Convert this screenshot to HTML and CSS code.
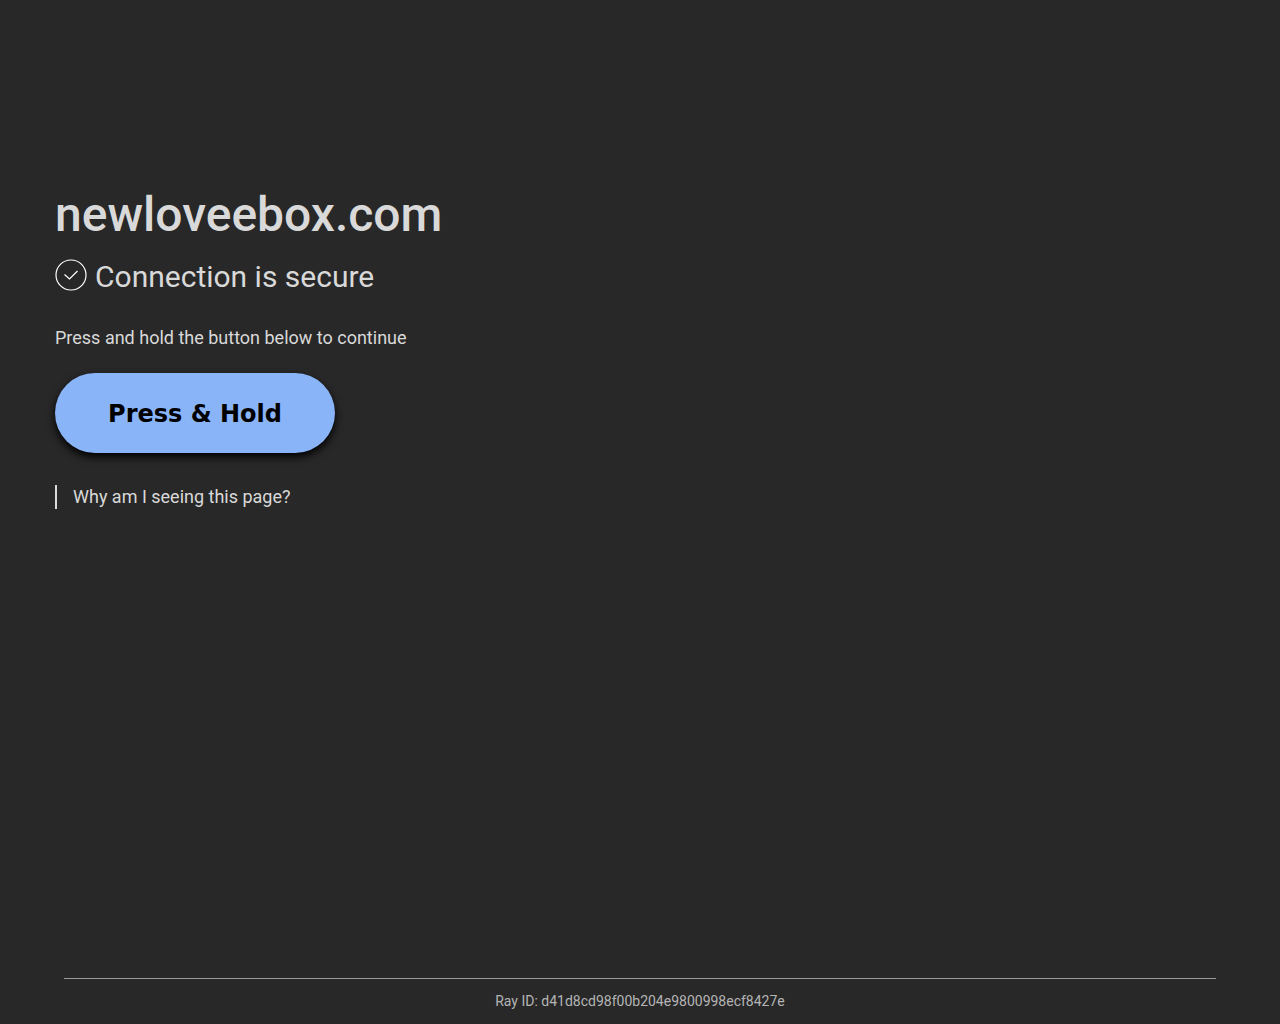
FILE: index.html
```html
<!DOCTYPE html>
<html lang="en">
<head>
  <meta charset="UTF-8">
  <meta name="viewport" content="width=device-width, initial-scale=1.0">
  <title>newloveebox.com</title>
  <link rel="stylesheet" href="styles.css">
</head>
<body>

  <main class="content">
    <h1>newloveebox.com</h1>
    <h2 class="status">
      <svg class="status-icon" viewBox="0 0 32 32" aria-hidden="true">
        <circle cx="16" cy="16" r="15"/>
        <path d="M9.500 15.500l5 4.500 8-8"/>
      </svg>
      Connection is secure
    </h2>
    <p class="hint">Press and hold the button below to continue</p>
    <button type="button" class="hold-btn">Press &amp; Hold</button>
    <div class="why">
      <a href="#">Why am I seeing this page?</a>
    </div>
  </main>

  <footer class="footer">Ray ID: d41d8cd98f00b204e9800998ecf8427e</footer>

</body>
</html>
```
FILE: styles.css
```css
* { box-sizing: border-box; margin: 0; padding: 0; }

body {
  display: flex;
  flex-direction: column;
  min-height: 100vh;
  font-family: Roboto, sans-serif;
  font-size: 18px;
  line-height: 24px;
  color: #d9d9d9;
  background: #282828;
}

/* — CONTENT ————————————— */
.content {
  flex: 1;
  display: flex;
  flex-direction: column;
  align-items: flex-start;
  padding: 185px 55px 32px;
}

h1 {
  font-size: 48px;
  font-weight: 500;
  line-height: 60px;
}

.status {
  display: flex;
  align-items: center;
  gap: 8px;
  margin-top: 12px;
  font-size: 30px;
  font-weight: 400;
  line-height: 40px;
}
.status-icon {
  width: 32px;
  height: 32px;
  margin-bottom: 4px;
  fill: none;
  stroke: #fff;
  stroke-width: 1.2;
}

.hint { margin-top: 29px; }

.hold-btn {
  width: 280px;
  height: 80px;
  margin-top: 23px;
  padding-top: 2px;
  border: none;
  border-radius: 40px;
  font-family: "DejaVu Sans", sans-serif;
  font-size: 24px;
  font-weight: 700;
  color: #000;
  background: #8ab4f8;
  box-shadow: 0 4px 8px #000;
  cursor: pointer;
}

.why {
  margin-top: 32px;
  padding-left: 16px;
  border-left: 2px solid #d9d9d9;
}
.why a {
  color: inherit;
  text-decoration: none;
}

/* — FOOTER ————————————— */
.footer {
  margin: 0 5%;
  padding: 10px 0;
  border-top: 1px solid #999;
  font-size: 14px;
  line-height: 25px;
  text-align: center;
  color: #b5b5b5;
}
```
